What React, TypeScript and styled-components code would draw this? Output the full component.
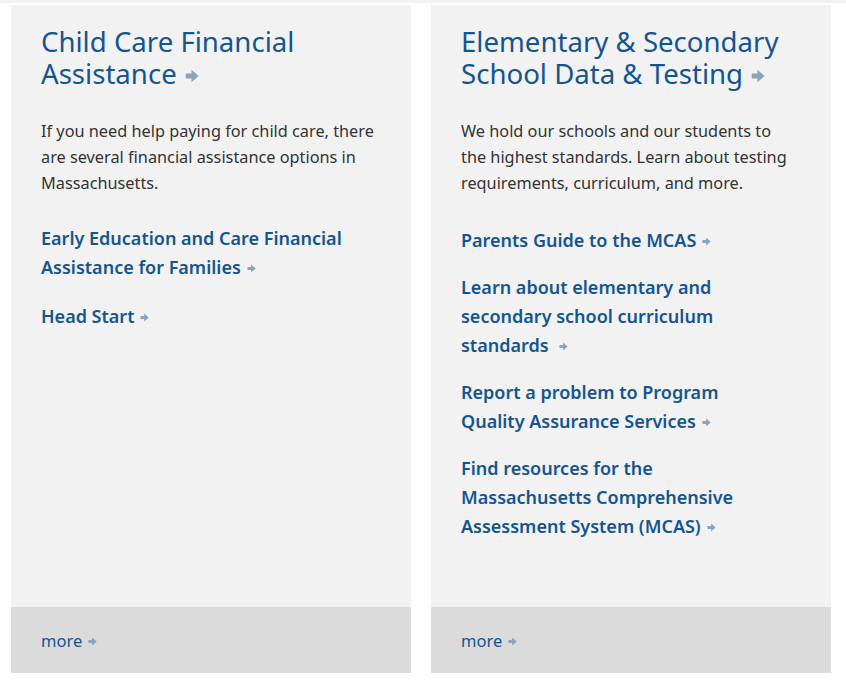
import React from "react";
import styled, { createGlobalStyle } from "styled-components";

const Global = createGlobalStyle`
  html, body { margin: 0; padding: 0; background: #ffffff; }
  body { font-family: "Noto Sans", "Open Sans", sans-serif; }
  * { box-sizing: border-box; }
`;

const Page = styled.div`
  width: 846px;
  height: 687px;
  display: flex;
  flex-direction: column;
`;

const TopStrip = styled.div`
  height: 3px;
  background: #f2f2f2;
  margin-bottom: 2px;
`;

const Row = styled.div`
  display: flex;
  gap: 20px;
  padding-left: 11px;
`;

const Card = styled.section`
  width: 400px;
  height: 668px;
  background: #f2f2f2;
  display: flex;
  flex-direction: column;
`;

const Body = styled.div`
  flex: 1;
  padding: 20px 30px 0 30px;
`;

const Title = styled.h2`
  margin: 0;
  font-family: "Noto Sans", sans-serif;
  font-weight: 400;
  font-size: 27.6px;
  line-height: 32px;
  color: #14558f;
`;

const Desc = styled.p`
  margin: 29px 0 0 0;
  width: 336px;
  font-size: 16.3px;
  line-height: 26px;
  color: #333333;
`;

const Links = styled.ul<{ $top: number; $gap: number }>`
  list-style: none;
  margin: ${(p) => p.$top}px 0 0 0;
  padding: 0;
  width: 318px;
  display: flex;
  flex-direction: column;
  gap: ${(p) => p.$gap}px;
`;

const LinkItem = styled.li`
  font-size: 18px;
  font-weight: 600;
  line-height: 29px;
  color: #14558f;
`;

const Footer = styled.div`
  height: 66px;
  background: #dbdbdb;
  display: flex;
  align-items: center;
  padding: 0 30px;
`;

const More = styled.span`
  font-size: 16.5px;
  font-weight: 400;
  color: #14558f;
`;

const ArrowSvg = styled.svg<{ $size: number; $gap: number }>`
  width: ${(p) => p.$size}px;
  height: ${(p) => p.$size}px;
  margin-left: ${(p) => p.$gap}px;
  vertical-align: middle;
  position: relative;
  top: -1px;
`;

const Arrow = ({ size = 9, gap = 5 }: { size?: number; gap?: number }) => (
  <ArrowSvg $size={size} $gap={gap} viewBox="0 0 10 10" aria-hidden>
    <path d="M0.5 3.2 H4.6 V0.6 L9.7 5 L4.6 9.4 V6.8 H0.5 Z" fill="#8aa4bd" />
  </ArrowSvg>
);

type CardData = {
  title: string;
  desc: string;
  links: string[];
  linksTop: number;
  linksGap: number;
};

const cards: CardData[] = [
  {
    title: "Child Care Financial Assistance",
    desc: "If you need help paying for child care, there are several financial assistance options in Massachusetts.",
    links: ["Early Education and Care Financial Assistance for Families", "Head Start"],
    linksTop: 28,
    linksGap: 20,
  },
  {
    title: "Elementary & Secondary School Data & Testing",
    desc: "We hold our schools and our students to the highest standards. Learn about testing requirements, curriculum, and more.",
    links: [
      "Parents Guide to the MCAS",
      "Learn about elementary and secondary school curriculum standards\u00a0",
      "Report a problem to Program Quality Assurance Services",
      "Find resources for the Massachusetts Comprehensive Assessment System (MCAS)",
    ],
    linksTop: 30,
    linksGap: 18,
  },
];

export default function App() {
  return (
    <Page>
      <Global />
      <TopStrip />
      <Row>
        {cards.map((c) => (
          <Card key={c.title}>
            <Body>
              <Title>
                {c.title}
                <Arrow size={14} gap={8} />
              </Title>
              <Desc>{c.desc}</Desc>
              <Links $top={c.linksTop} $gap={c.linksGap}>
                {c.links.map((l) => (
                  <LinkItem key={l}>
                    {l}
                    <Arrow size={9} gap={6} />
                  </LinkItem>
                ))}
              </Links>
            </Body>
            <Footer>
              <More>
                more
                <Arrow size={9} gap={6} />
              </More>
            </Footer>
          </Card>
        ))}
      </Row>
    </Page>
  );
}
